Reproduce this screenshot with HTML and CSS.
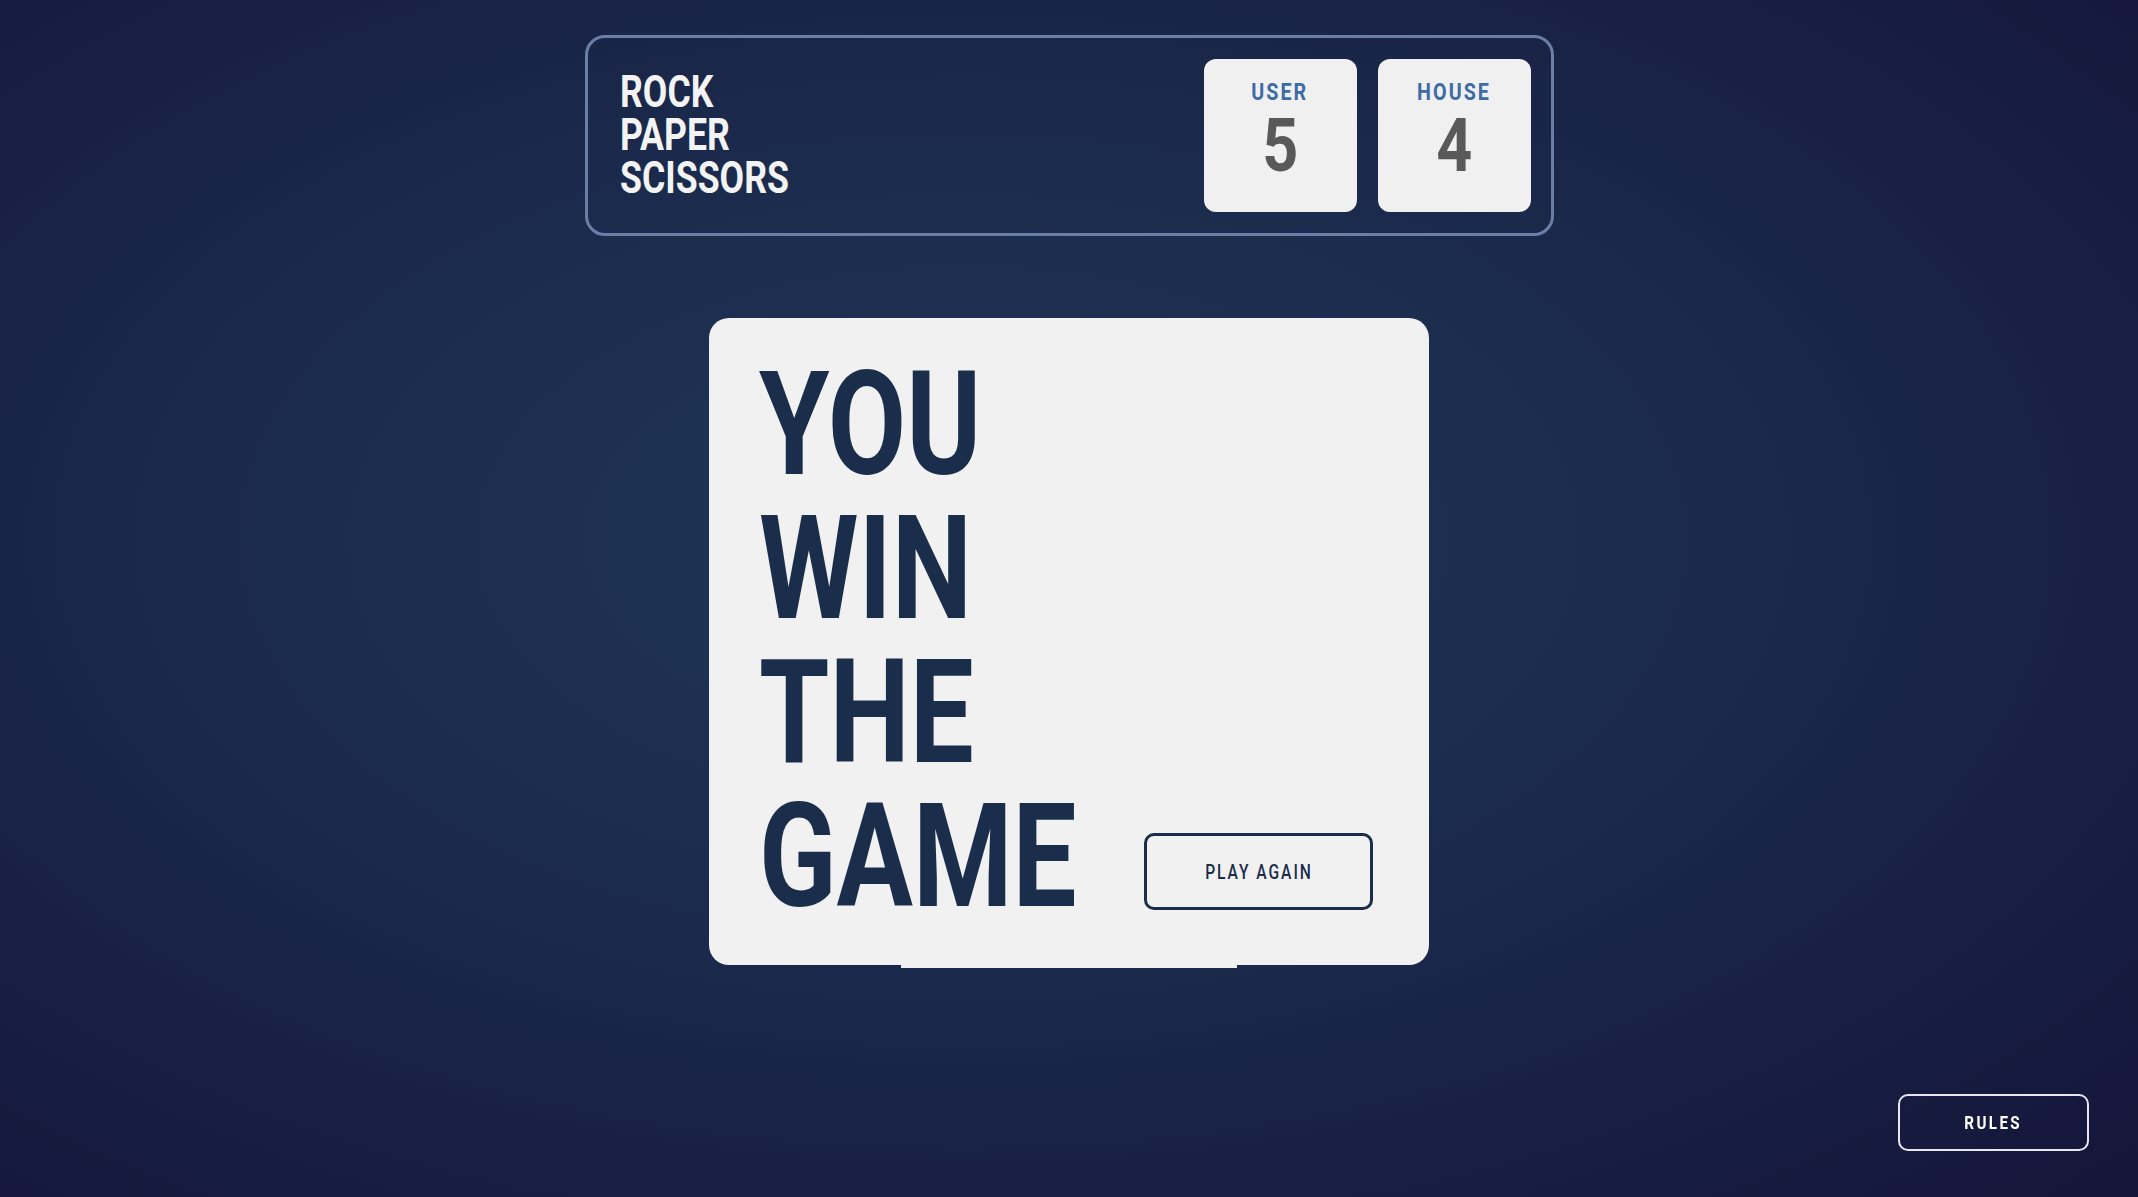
FILE: index.html
```html
<!DOCTYPE html>
<html lang="en">
<head>
<meta charset="utf-8">
<title>Rock Paper Scissors</title>
<link rel="stylesheet" href="styles.css">
</head>
<body>
<main class="app">
  <header class="header">
    <h1 class="title"><span class="squeeze">ROCK<br>PAPER<br>SCISSORS</span></h1>
    <div class="scores">
      <div class="score">
        <span class="score-label squeeze-c">USER</span>
        <span class="score-value squeeze-c">5</span>
      </div>
      <div class="score">
        <span class="score-label squeeze-c">HOUSE</span>
        <span class="score-value squeeze-c">4</span>
      </div>
    </div>
  </header>
  <section class="result">
    <h2 class="result-text"><span class="squeeze">YOU<br>WIN<br>THE<br>GAME</span></h2>
    <button class="play-again"><span class="squeeze-c">PLAY AGAIN</span></button>
  </section>
</main>
<button class="rules"><span class="squeeze-c">RULES</span></button>
</body>
</html>
```
FILE: styles.css
```css
* { box-sizing: border-box; }
html, body { margin: 0; height: 100%; }
body {
  font-family: Roboto, "Liberation Sans", sans-serif;
  font-weight: 700;
  background: radial-gradient(ellipse at 45% 45%, #1f3756 0%, #1b2a4c 45%, #141539 100%);
  overflow: hidden;
}
.squeeze {
  display: inline-block;
  white-space: nowrap;
  transform: scaleX(0.8);
  transform-origin: left center;
}
.squeeze-c {
  display: inline-block;
  white-space: nowrap;
  transform: scaleX(0.8);
  transform-origin: center center;
}
.app {
  display: flex;
  flex-direction: column;
  align-items: center;
  padding-top: 35px;
}
.header {
  width: 969px;
  height: 201px;
  border: 3px solid #6b7ea6;
  border-radius: 20px;
  display: flex;
  justify-content: space-between;
  align-items: center;
  padding: 0 20px 0 32px;
}
.title {
  margin: 0;
  width: 200px;
  min-width: 0;
  color: #f3f3f3;
  font-size: 44px;
  line-height: 43px;
  font-weight: 700;
}
.title .squeeze { transform: scaleX(0.81); }
.scores {
  display: flex;
  gap: 21px;
}
.score {
  width: 153px;
  height: 153px;
  background: #f0f0f0;
  border-radius: 12px;
  display: flex;
  flex-direction: column;
  align-items: center;
  padding-top: 20px;
}
.score-label {
  color: #3c6ba6;
  font-size: 24px;
  letter-spacing: 2.5px;
  line-height: 26px;
  transform: scaleX(0.82);
}
.score-value {
  color: #595959;
  font-size: 74px;
  line-height: 82px;
  transform: scaleX(0.85);
}
.result {
  position: relative;
  margin-top: 82px;
  width: 720px;
  height: 647px;
  background: #f1f1f1;
  border-radius: 20px;
  display: flex;
  justify-content: space-between;
  align-items: flex-end;
  padding: 36px 56px 36px 50px;
}
.result::after {
  content: "";
  position: absolute;
  left: 192px;
  width: 336px;
  bottom: -3px;
  height: 6px;
  background: #f1f1f1;
}
.result-text {
  margin: 0;
  flex: 0 0 330px;
  min-width: 0;
  color: #1a2d4a;
  font-size: 144px;
  line-height: 144px;
  font-weight: 700;
}
.result-text .squeeze { transform: scaleX(0.79); }
.play-again {
  flex: 0 0 229px;
  margin-bottom: 19px;
  height: 77px;
  border: 3px solid #1a2d4a;
  border-radius: 10px;
  background: transparent;
  color: #1a2d4a;
  font-family: inherit;
  font-weight: 500;
  font-size: 20px;
  letter-spacing: 2.5px;
}
.play-again .squeeze-c { transform: scaleX(0.78); }
.rules {
  position: fixed;
  right: 49px;
  bottom: 46px;
  width: 191px;
  height: 57px;
  border: 2px solid #e6e6ee;
  border-radius: 10px;
  background: transparent;
  color: #ffffff;
  font-family: inherit;
  font-weight: 700;
  font-size: 19px;
  letter-spacing: 3px;
}
```
